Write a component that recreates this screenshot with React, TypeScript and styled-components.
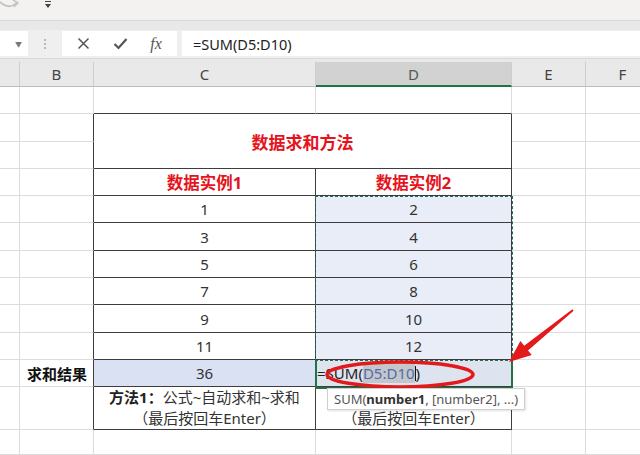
import styled, { createGlobalStyle } from 'styled-components';

const GlobalStyle = createGlobalStyle`
  html, body {
    margin: 0;
    padding: 0;
    background: #ffffff;
  }
  body {
    width: 640px;
    height: 455px;
    overflow: hidden;
    font-family: 'Noto Sans', 'Noto Sans CJK SC', sans-serif;
  }
`;

const COLS = '20px 74px 222px 196px 74px 74px';
const RED = '#e5141c';
const DARK = '#3d3d3d';
const GRID = '#dcdcdc';

const Page = styled.div`
  width: 640px;
  height: 455px;
  display: flex;
  flex-direction: column;
  overflow: hidden;
`;

const Ribbon = styled.div`
  height: 20px;
  background: #f3f2f1;
  display: flex;
  align-items: flex-start;
  gap: 20px;
`;

const Strip = styled.div<{ $h: number }>`
  height: ${(p) => p.$h}px;
  background: #e8e8e8;
  border-top: 1px solid #dadada;
  box-sizing: border-box;
`;

const FormulaBar = styled.div`
  height: 28px;
  background: #efefef;
  display: flex;
  align-items: stretch;
  padding: 1px 0 2px;
  box-sizing: border-box;
`;

const NameBox = styled.div`
  width: 28px;
  background: #ffffff;
  display: flex;
  align-items: center;
  justify-content: flex-end;
  padding-right: 6px;
  box-sizing: border-box;
  color: #777;
  font-size: 7px;
`;

const Grip = styled.div`
  width: 34px;
  display: flex;
  flex-direction: column;
  align-items: center;
  justify-content: center;
  gap: 2px;
  span {
    width: 2px;
    height: 2px;
    background: #b9b9b9;
  }
`;

const ActionBox = styled.div`
  width: 115px;
  background: #ffffff;
  display: flex;
  align-items: center;
  justify-content: space-around;
  padding: 0 4px;
  box-sizing: border-box;
  margin-right: 5px;
`;

const Fx = styled.span`
  font-family: 'Liberation Serif', serif;
  font-style: italic;
  font-size: 16px;
  color: #555;
`;

const FormulaInput = styled.div`
  flex: 1;
  background: #ffffff;
  display: flex;
  align-items: center;
  padding-left: 11px;
  font-size: 14.5px;
  color: #222;
`;

const HeaderRow = styled.div`
  height: 25px;
  display: grid;
  grid-template-columns: ${COLS};
  background: #e9e9e9;
`;

const ColHead = styled.div<{ $active?: boolean }>`
  display: flex;
  align-items: center;
  justify-content: center;
  font-size: 15px;
  color: ${(p) => (p.$active ? '#505a52' : '#444')};
  background: ${(p) => (p.$active ? '#d2d2d2' : 'transparent')};
  border-right: 1px solid #cdcdcd;
  border-bottom: ${(p) => (p.$active ? '2px solid #217346' : '1px solid #bdbdbd')};
  box-sizing: border-box;
`;

const Sheet = styled.div`
  position: relative;
  flex: 1;
  display: grid;
  grid-template-columns: ${COLS};
  grid-template-rows: repeat(11, 27.3px) 43px 1fr;
`;

type CellProps = {
  $rb?: boolean;
  $bb?: boolean;
  $bg?: string;
  $tall?: boolean;
  $left?: boolean;
  $right?: boolean;
};

const Cell = styled.div<CellProps>`
  box-sizing: border-box;
  border-right: 1px solid ${(p) => (p.$rb ? DARK : GRID)};
  border-bottom: 1px solid ${(p) => (p.$bb ? DARK : GRID)};
  background: ${(p) => p.$bg || '#ffffff'};
  display: flex;
  align-items: center;
  justify-content: ${(p) => (p.$left ? 'flex-start' : p.$right ? 'flex-end' : 'center')};
  grid-row: ${(p) => (p.$tall ? 'span 2' : 'auto')};
  grid-column: ${(p) => (p.$tall ? 'span 2' : 'auto')};
  font-size: 15px;
  color: #333;
  overflow: hidden;
  white-space: nowrap;
`;

const Title = styled.span`
  color: ${RED};
  font-weight: 700;
  font-size: 17px;
`;

const Heading = styled.span`
  color: ${RED};
  font-weight: 700;
  font-size: 16.5px;
`;

const Label = styled.span`
  font-weight: 700;
  color: #111;
  padding-right: 6px;
`;

const Method = styled.div`
  font-size: 15px;
  line-height: 21px;
  color: #333;
  text-align: center;
  b {
    font-weight: 700;
    color: #222;
  }
`;

const Formula = styled.span`
  padding-left: 1px;
  font-size: 15px;
  color: #222;
`;

const Ref = styled.span`
  color: #4f6fa6;
  background: #c3c6cc;
`;

const Caret = styled.span`
  display: inline-block;
  width: 1px;
  height: 15px;
  background: #111;
  vertical-align: -2px;
`;

const Marquee = styled.div`
  position: absolute;
  left: 315px;
  top: 108.5px;
  width: 198px;
  height: 165px;
  box-sizing: border-box;
  border: 1.5px dashed #246b52;
  pointer-events: none;
`;

const ActiveCell = styled.div`
  position: absolute;
  left: 315px;
  top: 273px;
  width: 198px;
  height: 28.5px;
  box-sizing: border-box;
  border: 2px solid #217346;
  border-top: none;
`;

const Tooltip = styled.div`
  position: absolute;
  left: 327px;
  top: 301px;
  height: 20px;
  padding: 0 6px;
  display: flex;
  align-items: center;
  background: #ffffff;
  border: 1px solid #cfcfcf;
  box-shadow: 1px 1px 2px rgba(0, 0, 0, 0.12);
  font-size: 13px;
  color: #555;
  white-space: nowrap;
  b {
    color: #333;
  }
`;

const Marks = styled.svg`
  position: absolute;
  left: 0;
  top: 0;
  width: 640px;
  height: 368px;
  pointer-events: none;
`;

type CellDef = CellProps & { content?: React.ReactNode; key: string };

function buildRows(): CellDef[] {
  const cells: CellDef[] = [];
  const blank = (k: string, extra: CellProps = {}) => cells.push({ key: k, ...extra });

  // 第1行：表格上边框
  blank('a1');
  blank('b1');
  blank('c1', { $bb: true });
  blank('d1', { $bb: true });
  blank('e1');
  blank('f1');

  // 标题（合并两行）
  blank('a2');
  blank('b2', { $rb: true });
  cells.push({ key: 't', $tall: true, $rb: true, $bb: true, content: <Title>数据求和方法</Title> });
  blank('e2');
  blank('f2');
  blank('a3');
  blank('b3', { $rb: true });
  blank('e3');
  blank('f3');

  // 表头
  blank('a4');
  blank('b4', { $rb: true });
  cells.push({ key: 'c4', $rb: true, $bb: true, content: <Heading>数据实例1</Heading> });
  cells.push({ key: 'd4', $rb: true, $bb: true, content: <Heading>数据实例2</Heading> });
  blank('e4');
  blank('f4');

  const data = [
    [1, 2],
    [3, 4],
    [5, 6],
    [7, 8],
    [9, 10],
    [11, 12],
  ];
  data.forEach(([c, d], i) => {
    blank(`a${i}d`);
    blank(`b${i}d`, { $rb: true });
    cells.push({ key: `c${i}d`, $rb: true, $bb: true, content: c });
    cells.push({ key: `d${i}d`, $rb: true, $bb: true, $bg: '#e8edf7', content: d });
    blank(`e${i}d`);
    blank(`f${i}d`);
  });

  // 求和结果
  blank('a11');
  cells.push({ key: 'b11', $rb: true, $right: true, content: <Label>求和结果</Label> });
  cells.push({ key: 'c11', $rb: true, $bb: true, $bg: '#d9e1f2', content: 36 });
  cells.push({
    key: 'd11',
    $rb: true,
    $bb: true,
    $left: true,
    $bg: '#dde3ef',
    content: (
      <Formula>
        =SUM(<Ref>D5:D10</Ref>
        <Caret />)
      </Formula>
    ),
  });
  blank('e11');
  blank('f11');

  // 方法说明
  blank('a12');
  blank('b12', { $rb: true });
  cells.push({
    key: 'c12',
    $rb: true,
    $bb: true,
    content: (
      <Method>
        <b>方法1：</b>公式~自动求和~求和
        <br />
        （最后按回车Enter）
      </Method>
    ),
  });
  cells.push({
    key: 'd12',
    $rb: true,
    $bb: true,
    content: (
      <Method>
        &nbsp;
        <br />
        （最后按回车Enter）
      </Method>
    ),
  });
  blank('e12');
  blank('f12');

  ['a', 'b', 'c', 'd', 'e', 'f'].forEach((c) => blank(`${c}13`));
  return cells;
}

export default function App() {
  const cells = buildRows();

  return (
    <Page>
      <GlobalStyle />
      <Ribbon>
        <svg width="24" height="10" viewBox="0 0 24 10">
          <path d="M0 2 Q9 10 17 3" fill="none" stroke="#c4c4c4" strokeWidth="1.8" />
          <path d="M13 0 L18 3 L14 7" fill="none" stroke="#c4c4c4" strokeWidth="1.5" />
        </svg>
        <svg width="8" height="9" viewBox="0 0 8 9">
          <rect x="1" y="1" width="6" height="1" fill="#444" />
          <path d="M1 4 L7 4 L4 8 Z" fill="#444" />
        </svg>
      </Ribbon>
      <Strip $h={10} />
      <FormulaBar>
        <NameBox>▼</NameBox>
        <Grip>
          <span />
          <span />
          <span />
        </Grip>
        <ActionBox>
          <svg width="13" height="13" viewBox="0 0 13 13">
            <path d="M1.5 1.5 L11.5 11.5 M11.5 1.5 L1.5 11.5" stroke="#555" strokeWidth="1.5" />
          </svg>
          <svg width="15" height="13" viewBox="0 0 15 13">
            <path d="M1.5 7 L5.5 11 L13.5 2" fill="none" stroke="#555" strokeWidth="2.2" />
          </svg>
          <Fx>fx</Fx>
        </ActionBox>
        <FormulaInput>=SUM(D5:D10)</FormulaInput>
      </FormulaBar>
      <Strip $h={4} />
      <HeaderRow>
        <ColHead />
        <ColHead>B</ColHead>
        <ColHead>C</ColHead>
        <ColHead $active>D</ColHead>
        <ColHead>E</ColHead>
        <ColHead>F</ColHead>
      </HeaderRow>
      <Sheet>
        {cells.map(({ key, content, ...props }) => (
          <Cell key={key} {...props}>
            {content}
          </Cell>
        ))}
        <Marquee />
        <ActiveCell />
        <Marks viewBox="0 0 640 368">
          <ellipse cx="400" cy="287.5" rx="73" ry="12.5" fill="none" stroke="#e3191c" strokeWidth="3.5" />
          <polygon
            points="509,275 520.4,254.1 524.2,258.8 572.4,222.2 573.6,223.8 528,263.4 531.8,268.1"
            fill="#e3191c"
          />
        </Marks>
        <Tooltip>
          SUM(<b>number1</b>, [number2], ...)
        </Tooltip>
      </Sheet>
    </Page>
  );
}
